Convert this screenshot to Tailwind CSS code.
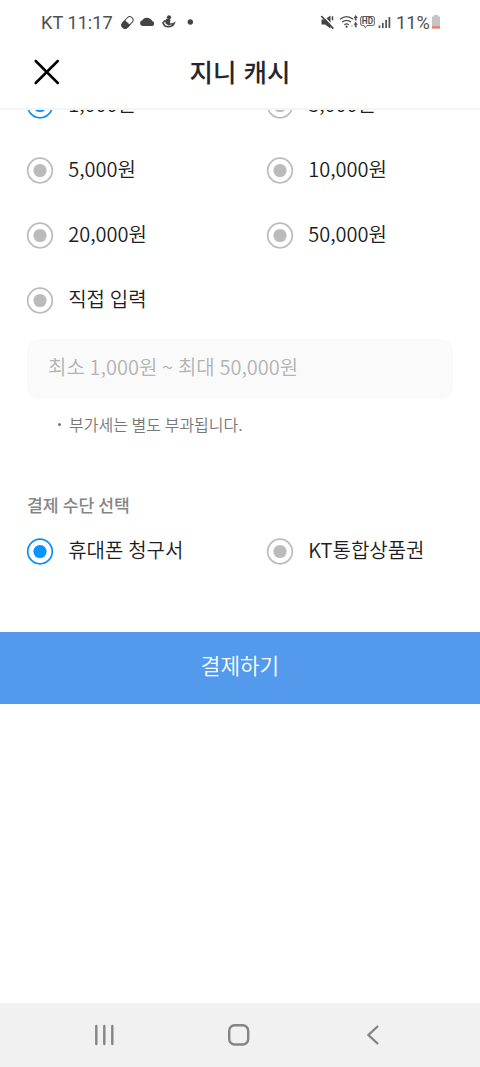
<!DOCTYPE html>
<html lang="ko">
<head>
<meta charset="utf-8">
<title>지니 캐시</title>
<script src="https://cdn.jsdelivr.net/npm/@tailwindcss/browser@4"></script>
</head>
<body class="bg-white">
<div class="flex h-[1067px] w-[480px] flex-col overflow-hidden bg-white font-['Noto_Sans_CJK_KR',sans-serif] text-xl font-[350] text-[#1c1d22]">
  <div class="flex h-[46px] shrink-0 items-center justify-between pr-[39px] pl-[41px] font-[Roboto,sans-serif] text-[18.200px] font-normal text-[#505050]">
    <div class="flex items-center">
      <span class="w-[78px] whitespace-nowrap">KT 11:17</span>
      <svg class="h-[18px] w-[80px]" viewBox="0 0 80 18">
        <g transform="rotate(-48 8.5 8.5)"><rect x="1.800" y="5.200" width="13.400" height="6.600" rx="3.300" fill="#fff" stroke="#444" stroke-width="1"/><path d="M8.500 4.700H5.100a3.800 3.800 0 0 0 0 7.600H8.500z" fill="#444"/></g>
        <path d="M23.600 12a2.900 2.900 0 0 1-.3-5.700 5.200 5.200 0 0 1 8-1.200 4.600 4.600 0 0 1 1.900 2 2.600 2.600 0 0 1 .4 4.900z" fill="#444"/>
        <circle cx="50" cy="3.300" r="2.100" fill="#444"/>
        <path d="M47 4.700 51.500 5.300 51 8.500 52.300 10.500 49.800 11.500 46.500 9.500z" fill="#444"/>
        <path d="M43.800 7.800q.8 4.900 5.400 4.900t5.800-3.200q-1.700 1.200-2.800-.1" fill="none" stroke="#444" stroke-width="1.700"/>
        <circle cx="45.800" cy="7.200" r="1.300" fill="#444"/>
        <circle cx="71.300" cy="8" r="2.700" fill="#444"/>
      </svg>
    </div>
    <div class="flex items-center">
      <svg class="h-[18px] w-[76px]" viewBox="0 0 76 18">
        <path d="M1.500 5.500h3.500l5.500-4v13l-5.500-4h-3.500z" fill="#444"/><path d="M12.500 2.300v4" fill="none" stroke="#444" stroke-width="1.500"/>
        <path d="M2.400 1 14.300 13.600" stroke="#fff" stroke-width="1.500"/><path d="M1.300 2 13.300 14.600" stroke="#444" stroke-width="1.700"/>
        <g fill="none" stroke="#505050" stroke-width="1.300"><path d="M20 5.300q6.700-5.500 13.200 0M22.200 8.100q4.400-3.600 8.800 0M24.300 10.700q2.300-1.800 4.600 0"/></g>
        <circle cx="26.600" cy="12.700" r="1.100" fill="#505050"/>
        <path d="m35.700 1 2.200 3h-1.300v2.500h-1.800V4h-1.300zM35.700 7.800l2.200 3h-1.300v2.500h-1.800v-2.500h-1.300z" fill="#505050"/>
        <path d="m30.500 11.200 1.400 2.400 1.400-2.400z" fill="#bbb"/>
        <path d="M42.200 2.500h10.600q1.500 0 1.500 1.500v6q0 1.500-1.500 1.500h-5.800l-1.700 2.200-1.300-2.200h-1.800q-1.500 0-1.500-1.500V4q0-1.500 1.500-1.500z" fill="none" stroke="#606060" stroke-width="1"/>
        <text x="41.800" y="10" font-size="8.300" font-weight="700" fill="#505050" textLength="11.400">HD</text>
        <path d="M59.500 11.500V14M62.800 9V14M66.100 6V14M69.400 3V14" stroke="#505050" stroke-width="1.700"/>
      </svg>
      <span class="w-[35px] whitespace-nowrap">11%</span>
      <svg class="h-[18px] w-[10px]" viewBox="0 0 10 18"><path d="M3 1h4v1.500h2v12H1v-12h2z" fill="#c4c4c4"/><path d="M1 12.200h8v2.300H1z" fill="#ee7c60"/></svg>
    </div>
  </div>

  <header class="grid h-[64px] shrink-0 grid-cols-[80px_1fr_80px] items-center border-b-2 border-[#f4f4f4]">
    <svg class="mt-[-10px] ml-[33px] h-7 w-7" viewBox="0 0 28 28"><path d="M2.700 3 24.800 25M24.800 3 2.700 25" stroke="#000" stroke-width="2.500" stroke-linecap="round"/></svg>
    <h1 class="mt-[-13px] text-center text-[25.500px] leading-9 font-medium text-[#26272d]">지니 캐시</h1>
  </header>

  <main class="shrink-0 [word-spacing:-0.8px]">
    <div class="h-[229px] overflow-hidden">
      <div class="-mt-[37px] grid auto-rows-[65px] grid-cols-2 pl-[26px]">
        <label class="flex items-center gap-[14.200px]"><svg class="h-[27px] w-[28px]" viewBox="0 0 28 27"><circle cx="14" cy="13.500" r="12.300" fill="none" stroke="#0d90f5" stroke-width="1.700"/><circle cx="14" cy="13.500" r="6.600" fill="#0b93ff"/></svg><span class="-mt-[3px]">1,000원</span></label>
        <label class="ml-[13px] flex items-center gap-[14.200px]"><svg class="h-[27px] w-[28px]" viewBox="0 0 28 27"><circle cx="14" cy="13.500" r="12.300" fill="none" stroke="#bbb" stroke-width="1.700"/><circle cx="14" cy="13.500" r="6.600" fill="#bbb"/></svg><span class="-mt-[3px]">3,000원</span></label>
        <label class="flex items-center gap-[14.200px]"><svg class="h-[27px] w-[28px]" viewBox="0 0 28 27"><circle cx="14" cy="13.500" r="12.300" fill="none" stroke="#bbb" stroke-width="1.700"/><circle cx="14" cy="13.500" r="6.600" fill="#bbb"/></svg><span class="-mt-[3px]">5,000원</span></label>
        <label class="ml-[13px] flex items-center gap-[14.200px]"><svg class="h-[27px] w-[28px]" viewBox="0 0 28 27"><circle cx="14" cy="13.500" r="12.300" fill="none" stroke="#bbb" stroke-width="1.700"/><circle cx="14" cy="13.500" r="6.600" fill="#bbb"/></svg><span class="-mt-[3px]">10,000원</span></label>
        <label class="flex items-center gap-[14.200px]"><svg class="h-[27px] w-[28px]" viewBox="0 0 28 27"><circle cx="14" cy="13.500" r="12.300" fill="none" stroke="#bbb" stroke-width="1.700"/><circle cx="14" cy="13.500" r="6.600" fill="#bbb"/></svg><span class="-mt-[3px]">20,000원</span></label>
        <label class="ml-[13px] flex items-center gap-[14.200px]"><svg class="h-[27px] w-[28px]" viewBox="0 0 28 27"><circle cx="14" cy="13.500" r="12.300" fill="none" stroke="#bbb" stroke-width="1.700"/><circle cx="14" cy="13.500" r="6.600" fill="#bbb"/></svg><span class="-mt-[3px]">50,000원</span></label>
        <label class="flex items-center gap-[14.200px]"><svg class="h-[27px] w-[28px]" viewBox="0 0 28 27"><circle cx="14" cy="13.500" r="12.300" fill="none" stroke="#bbb" stroke-width="1.700"/><circle cx="14" cy="13.500" r="6.600" fill="#bbb"/></svg><span class="-mt-[3px]">직접 입력</span></label>
      </div>
    </div>
    <div class="mx-[27px] flex h-[60px] items-center rounded-xl bg-[#fafafa] pl-[21px] text-[#b3b3b3]"><span class="-mt-[5px]">최소 1,000원 ~ 최대 50,000원</span></div>
    <p class="mt-[13px] flex h-6 items-center pl-[58px] text-base leading-6 text-[#777]"><span class="mr-[8px] h-[3px] w-[3px] rounded-full bg-[#777]"></span>부가세는 별도 부과됩니다.</p>
    <h2 class="mt-[57px] h-6 pl-[27px] text-[17.200px] leading-6 font-medium text-[#858585]">결제 수단 선택</h2>
    <div class="mt-[21px] grid h-[27px] grid-cols-2 pl-[26px]">
      <label class="flex items-center gap-[14.200px]"><svg class="h-[27px] w-[28px]" viewBox="0 0 28 27"><circle cx="14" cy="13.500" r="12.300" fill="none" stroke="#0d90f5" stroke-width="1.700"/><circle cx="14" cy="13.500" r="6.600" fill="#0b93ff"/></svg><span class="-mt-[4px]">휴대폰 청구서</span></label>
      <label class="ml-[13px] flex items-center gap-[14.200px]"><svg class="h-[27px] w-[28px]" viewBox="0 0 28 27"><circle cx="14" cy="13.500" r="12.300" fill="none" stroke="#bbb" stroke-width="1.700"/><circle cx="14" cy="13.500" r="6.600" fill="#bbb"/></svg><span class="-mt-[4px]">KT통합상품권</span></label>
    </div>
    <button class="mt-[67px] flex h-[72px] w-full items-center justify-center bg-[#539aec] text-[21.300px] text-white"><span class="-mt-[7px]">결제하기</span></button>
  </main>

  <nav class="mt-auto h-16 shrink-0 bg-[#f1f1f1]">
    <svg class="h-16 w-full" viewBox="0 0 480 64" fill="none" stroke="#858585" stroke-width="2.400" stroke-linecap="round">
      <path d="M96.300 23V41M104.300 23V41M112.300 23V41"/>
      <rect x="229.200" y="22.200" width="19" height="19.300" rx="5.500"/>
      <path d="M378 23 368.500 32 378 41" stroke-linecap="butt"/>
    </svg>
  </nav>
</div>
</body>
</html>
